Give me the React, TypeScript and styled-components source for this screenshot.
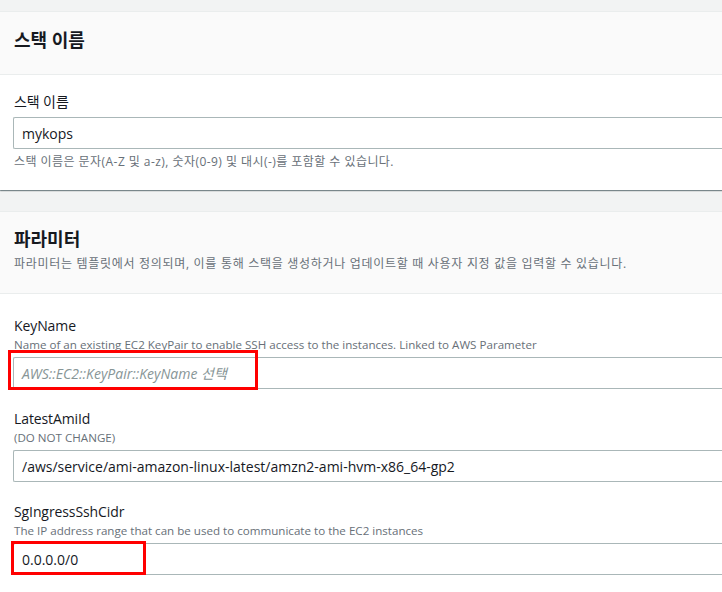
import React from 'react';
import styled, { createGlobalStyle } from 'styled-components';

const GlobalStyle = createGlobalStyle`
  html, body {
    margin: 0;
    padding: 0;
    background: #f2f3f3;
    overflow: hidden;
  }
  body {
    font-family: 'Open Sans', 'Noto Sans CJK KR', sans-serif;
    color: #16191f;
  }
`;

const Page = styled.div`
  width: 760px;
  padding-top: 11px;
  display: flex;
  flex-direction: column;
  gap: 21px;
`;

const Card = styled.section`
  background: #ffffff;
  border-top: 1px solid #eaeded;
  box-shadow: 0 1px 1px 0 rgba(0, 28, 36, 0.3), 1px 1px 1px 0 rgba(0, 28, 36, 0.15),
    -1px 1px 1px 0 rgba(0, 28, 36, 0.15);
`;

const CardHeader = styled.header<{ $pad: string }>`
  background: #fafafa;
  border-bottom: 1px solid #eaeded;
  padding: ${(p) => p.$pad};
`;

const CardTitle = styled.h2`
  margin: 0;
  font-size: 18px;
  font-weight: 700;
  line-height: 27px;
  color: #16191f;
`;

const CardDesc = styled.p`
  margin: 2px 0 0;
  font-size: 12px;
  line-height: 18px;
  letter-spacing: 0.7px;
  color: #687078;
`;

const CardBody = styled.div<{ $top: number; $bottom: number }>`
  padding: ${(p) => `${p.$top}px 0 ${p.$bottom}px 14px`};
  display: flex;
  flex-direction: column;
  gap: 20px;
`;

const Field = styled.div`
  display: flex;
  flex-direction: column;
`;

const Label = styled.label`
  font-size: 14px;
  line-height: 20px;
  letter-spacing: -0.1px;
  color: #16191f;
`;

const Desc = styled.div`
  font-size: 11.6px;
  line-height: 17px;
  color: #687078;
`;

const InputWrap = styled.div<{ $gap?: number }>`
  position: relative;
  margin-top: ${(p) => p.$gap ?? 4}px;
`;

const Input = styled.div<{ $placeholder?: boolean }>`
  height: 30px;
  margin-left: -1px;
  border: 1px solid #aab7b8;
  border-right: none;
  border-radius: 2px 0 0 2px;
  padding: 0 8px;
  display: flex;
  align-items: center;
  font-size: 14px;
  color: ${(p) => (p.$placeholder ? '#879596' : '#16191f')};
  font-style: ${(p) => (p.$placeholder ? 'italic' : 'normal')};
  background: #ffffff;
`;

const Hint = styled.div`
  margin-top: 4px;
  font-size: 12px;
  line-height: 18px;
  letter-spacing: 0.45px;
  color: #687078;
`;

const RedBox = styled.div<{ $left: number; $top: number; $w: number; $h: number }>`
  position: absolute;
  left: ${(p) => p.$left}px;
  top: ${(p) => p.$top}px;
  width: ${(p) => p.$w}px;
  height: ${(p) => p.$h}px;
  box-sizing: border-box;
  border: 3px solid #ff0000;
  pointer-events: none;
`;

export default function App() {
  return (
    <>
      <GlobalStyle />
      <Page>
        <Card>
          <CardHeader $pad="15px 15px 20px 14px">
            <CardTitle>스택 이름</CardTitle>
          </CardHeader>
          <CardBody $top={17} $bottom={19}>
            <Field>
              <Label>스택 이름</Label>
              <InputWrap $gap={5}>
                <Input>mykops</Input>
              </InputWrap>
              <Hint>스택 이름은 문자(A-Z 및 a-z), 숫자(0-9) 및 대시(-)를 포함할 수 있습니다.</Hint>
            </Field>
          </CardBody>
        </Card>

        <Card>
          <CardHeader $pad="14px 15px 20px 14px">
            <CardTitle>파라미터</CardTitle>
            <CardDesc>
              파라미터는 템플릿에서 정의되며, 이를 통해 스택을 생성하거나 업데이트할 때 사용자 지정 값을 입력할 수 있습니다.
            </CardDesc>
          </CardHeader>
          <CardBody $top={22} $bottom={20}>
            <Field>
              <Label>KeyName</Label>
              <Desc>Name of an existing EC2 KeyPair to enable SSH access to the instances. Linked to AWS Parameter</Desc>
              <InputWrap>
                <Input $placeholder>AWS::EC2::KeyPair::KeyName 선택</Input>
                <RedBox $left={-6} $top={-7} $w={250} $h={40} />
              </InputWrap>
            </Field>
            <Field>
              <Label>LatestAmiId</Label>
              <Desc>(DO NOT CHANGE)</Desc>
              <InputWrap>
                <Input>/aws/service/ami-amazon-linux-latest/amzn2-ami-hvm-x86_64-gp2</Input>
              </InputWrap>
            </Field>
            <Field>
              <Label>SgIngressSshCidr</Label>
              <Desc>The IP address range that can be used to communicate to the EC2 instances</Desc>
              <InputWrap>
                <Input>0.0.0.0/0</Input>
                <RedBox $left={-3} $top={-2} $w={135} $h={34} />
              </InputWrap>
            </Field>
          </CardBody>
        </Card>
      </Page>
    </>
  );
}
